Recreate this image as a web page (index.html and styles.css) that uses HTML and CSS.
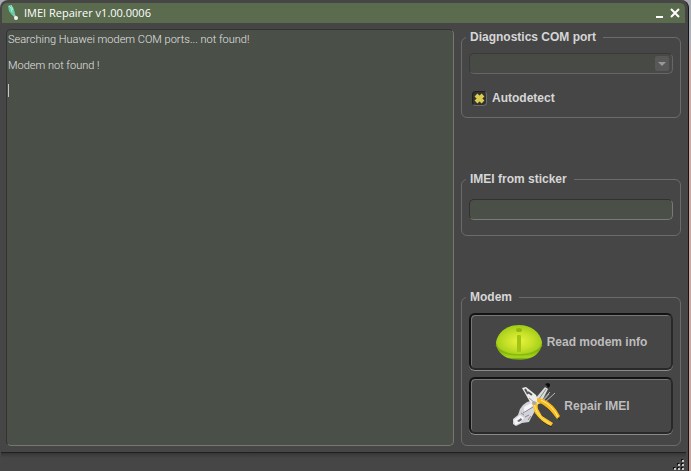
FILE: index.html
```html
<!DOCTYPE html>
<html lang="en">

<head>
    <meta charset="utf-8">
    <title>IMEI Repairer v1.00.0006</title>
    <meta name="viewport" content="width=device-width,initial-scale=1">
    <link rel="stylesheet" href="styles.css">
</head>

<body>
    <div class="window">
        <header class="titlebar">
            <svg class="app-icon" width="12" height="18" viewBox="0 0 12 18" aria-hidden="true">
                <path d="M1 2L3 1L6 3L8 9L7 12L5 11L2 7Z" fill="#5fcfa8"/>
                <path d="M2 2L4 4L5 8M4 1L6 6" stroke="#a5ecd2" fill="none"/>
                <path d="M6 11L8 10L9 13L7 13Z" fill="#9cc9b6"/>
                <circle cx="9" cy="14" r="2" fill="#f2f5f2"/>
            </svg>
            <h1 class="title">IMEI Repairer v1.00.0006</h1>
            <button class="win-btn" type="button" aria-label="Minimize">
                <svg width="10" height="10" viewBox="0 0 10 10"><path d="M1 8h7v2h-7z" fill="#fff"/></svg>
            </button>
            <button class="win-btn" type="button" aria-label="Close">
                <svg width="10" height="10" viewBox="0 0 10 10"><path d="M1 1L9 9M9 1L1 9" stroke="#fff" stroke-width="2"/></svg>
            </button>
        </header>

        <main class="content">
            <div class="log-box">
                <textarea class="log" aria-label="Log" spellcheck="false">Searching Huawei modem COM ports... not found!

Modem not found !

</textarea>
                <span class="caret"></span>
            </div>

            <form class="side">
                <fieldset class="group group-port">
                    <legend>Diagnostics COM port</legend>
                    <div class="combo">
                        <select class="field" aria-label="Diagnostics COM port" disabled>
                            <option></option>
                        </select>
                        <span class="combo-arrow">
                            <svg width="8" height="4" viewBox="0 0 8 4"><path d="M0 0h8l-4 4z" fill="#989898"/></svg>
                        </span>
                    </div>
                    <label class="check">
                        <input type="checkbox" checked>
                        <span>Autodetect</span>
                    </label>
                </fieldset>

                <fieldset class="group group-imei">
                    <legend>IMEI from sticker</legend>
                    <input class="field" type="text" aria-label="IMEI from sticker">
                </fieldset>

                <fieldset class="group group-modem">
                    <legend>Modem</legend>
                    <button class="action" type="button">
                        <svg width="48" height="48" viewBox="0 0 48 48" aria-hidden="true">
                            <defs>
                                <radialGradient id="lime" cx="50%" cy="55%" r="58%">
                                    <stop offset="0" stop-color="#e8f43c"/>
                                    <stop offset="0.5" stop-color="#c6e028"/>
                                    <stop offset="1" stop-color="#98c914"/>
                                </radialGradient>
                                <linearGradient id="rim" x1="0" y1="0" x2="0" y2="1">
                                    <stop offset="0.5" stop-color="#85b40c"/>
                                    <stop offset="0.85" stop-color="#a5d81c"/>
                                    <stop offset="1" stop-color="#5c7a16"/>
                                </linearGradient>
                            </defs>
                            <path d="M1 24C1 35 11 42 24 42S47 35 47 24Z" fill="url(#rim)"/>
                            <path d="M1 24C3 14 12 7 24 7S45 14 47 24C46 32 36 36 24 36S2 32 1 24Z" fill="url(#lime)"/>
                            <path d="M1 27C4 34 13 37 24 37S44 34 47 27" fill="none" stroke="#84b60c"/>
                            <ellipse cx="24" cy="12" rx="3" ry="2" fill="#91b80c"/>
                            <rect x="22" y="17" width="4" height="17" rx="1" fill="#a3c414"/>
                        </svg>
                        <span>Read modem info</span>
                    </button>
                    <button class="action" type="button">
                        <svg width="48" height="48" viewBox="0 0 48 48" aria-hidden="true">
                            <path d="M29 20L38 10M31 22L43 11M31 19L37 12" stroke="#b4b8bc" fill="none"/>
                            <path d="M23 17L33 5L36 7L29 21L24 23Z" fill="#dcdcdc"/>
                            <path d="M27 17L34 7" stroke="#888" fill="none"/>
                            <path d="M33 2l3-1 2 1v2l-2 2-1-2z" fill="#0c0c0c"/>
                            <path d="M15 20L22 18L26 22L23 29L19 36L17 40L10 41L4 44L1 42L1 37L6 33L8 27L11 23Z" fill="#d2d2d8"/>
                            <path d="M2 38L8 33L12 36L8 41L3 43ZM12 25L19 21L21 24L12 31Z" fill="#f5f5f8"/>
                            <path d="M5 39l4-3 1 2-3 2z" fill="#66666c"/>
                            <path d="M13 35l4-2M11 31l10-6M16 38l3-4M9 31l3 2" stroke="#88888e" fill="none"/>
                            <path d="M10 6L14 5L24 13L27 20L23 25L18 20Z" fill="#ececec"/>
                            <path d="M13 7l3 5M16 10l4 3" stroke="#55555a" stroke-width="2" fill="none"/>
                            <path d="M17 16l5 4" stroke="#999" fill="none"/>
                            <path d="M24 32Q30 41 40 45M34 25L48 38" stroke="#2c2a26" fill="none"/>
                            <path d="M20 20L25 20L26 27L30 34L41 41L39 44Q29 40 23 31Z" fill="#ffc420"/>
                            <path d="M22 22L25 30Q29 37 38 42" fill="none" stroke="#ffe784"/>
                            <path d="M25 16L31 17Q42 22 48 34L45 37Q37 26 30 22L25 20Z" fill="#fbb914"/>
                            <path d="M29 18Q40 23 46 35" fill="none" stroke="#fff0ba"/>
                            <circle cx="22" cy="21" r="2" fill="#a8a8a8"/>
                        </svg>
                        <span>Repair IMEI</span>
                    </button>
                </fieldset>
            </form>
        </main>

        <footer class="statusbar">
            <svg width="12" height="12" viewBox="0 0 12 12" aria-hidden="true">
                <path d="M8 0h2v2h-2zM4 4h2v2h-2zM8 4h2v2h-2zM0 8h2v2h-2zM4 8h2v2h-2zM8 8h2v2h-2z" fill="#111"/>
                <path d="M9 1h2v2h-2zM5 5h2v2h-2zM9 5h2v2h-2zM1 9h2v2h-2zM5 9h2v2h-2zM9 9h2v2h-2z" fill="#c4c4c4"/>
            </svg>
        </footer>
    </div>
</body>

</html>
```

FILE: styles.css
```css
* {
    box-sizing: border-box;
}

html, body {
    height: 100%;
    margin: 0;
    padding: 0;
}

body {
    background: linear-gradient(#a9adb3 0, #b0b4ba 40px, #cfa9a5 60px, #c9a3a0 100%);
    padding-right: 2px;
    font-family: "Liberation Sans", Arial, sans-serif;
    font-size: 12px;
    color: #d6d6d6;
}

.window {
    display: flex;
    flex-direction: column;
    height: 100%;
    padding-top: 3px;
    background: #464646;
    border-right: 1px solid #151515;
    border-radius: 8px 8px 0 0;
}

.titlebar {
    display: flex;
    align-items: center;
    gap: 5px;
    height: 20px;
    margin: 0 3px 0 2px;
    padding: 0 5px;
    background: #5a6b4e;
    border-radius: 5px 5px 0 0;
}

.title {
    flex: 1;
    margin: 0;
    font-family: "Open Sans", "Noto Sans", sans-serif;
    font-size: 11px;
    font-weight: 400;
    line-height: 20px;
    color: #fff;
}

.win-btn {
    display: flex;
    padding: 0;
    border: 0;
    background: none;
}

.content {
    display: flex;
    flex: 1;
    gap: 7px;
    min-height: 0;
    padding: 6px 7px 6px 6px;
}

.log-box {
    position: relative;
    display: flex;
    flex: 1;
}

.log {
    flex: 1;
    min-width: 0;
    margin: 0;
    padding: 3px 1px;
    border: 1px solid #747a70;
    border-top-color: #303330;
    border-left-color: #303330;
    border-radius: 5px;
    outline: 0;
    background: #4a4f48;
    font-family: Roboto, "Liberation Sans", sans-serif;
    font-size: 11px;
    font-weight: 300;
    line-height: 13px;
    color: #e4e4e4;
    resize: none;
}

/* insertion point, four lines below the first */
.caret {
    position: absolute;
    top: 55px;
    left: 2px;
    width: 1px;
    height: 13px;
    background: #c4c4c4;
}

.side {
    display: flex;
    flex-direction: column;
    justify-content: space-between;
    flex: 0 0 220px;
    margin: 0;
}

.group {
    min-width: 0;
    margin: 0;
    padding: 8px 7px 11px;
    border: 1px solid #6b6b6b;
    border-radius: 6px;
}

.group legend {
    padding: 0 7px 0 4px;
    margin-left: -3px;
    font-weight: 700;
    line-height: 16px;
}

.group-imei {
    padding-top: 12px;
    padding-bottom: 15px;
}

.field {
    display: block;
    width: 100%;
    height: 21px;
    margin: 0;
    padding: 0 6px;
    border: 1px solid #757b75;
    border-top-color: #303230;
    border-left-color: #303230;
    border-radius: 5px;
    outline: 0;
    background: #4a5048;
    font: inherit;
    color: #e4e4e4;
    opacity: 1;
    appearance: none;
}

.combo {
    position: relative;
}

.combo .field {
    border-color: #3a3a3a #666 #666 #3a3a3a;
    background: #484a46;
}

.combo-arrow {
    position: absolute;
    top: 3px;
    right: 4px;
    display: flex;
    align-items: center;
    justify-content: center;
    width: 14px;
    height: 15px;
    border-radius: 2px;
    background: #585858;
    pointer-events: none;
}

.check {
    display: flex;
    align-items: center;
    gap: 5px;
    margin-top: 16px;
    padding-left: 3px;
    font-weight: 700;
    line-height: 16px;
}

.check input {
    width: 15px;
    height: 15px;
    margin: 0;
    border: 1px solid #65706a;
    border-top-color: #202020;
    border-left-color: #202020;
    border-radius: 4px;
    background: #30332f;
    appearance: none;
}

.check input:checked {
    background: url("data:image/svg+xml,%3Csvg xmlns='http://www.w3.org/2000/svg' viewBox='0 0 13 13'%3E%3Cpath d='M3 3L10 10M10 3L3 10' stroke='%23dccb50' stroke-width='4'/%3E%3C/svg%3E") #30332f;
}

.action {
    display: flex;
    align-items: center;
    justify-content: center;
    gap: 4px;
    width: 100%;
    height: 57px;
    padding: 0;
    border: 2px solid #131313;
    border-right-color: #292929;
    border-bottom-color: #292929;
    border-radius: 6px;
    background: #464646;
    box-shadow: inset 1px 1px 0 #777, 0 1px 0 #8a8a8a;
    font: inherit;
    font-weight: 700;
    color: #bdbdbd;
}

.action + .action {
    margin-top: 7px;
}

.statusbar {
    display: flex;
    align-items: flex-end;
    justify-content: flex-end;
    height: 19px;
    margin: 0 2px 0 1px;
    padding-right: 1px;
    border-top: 1px solid #202020;
    background: linear-gradient(#363636, #464646 5px);
}
```
